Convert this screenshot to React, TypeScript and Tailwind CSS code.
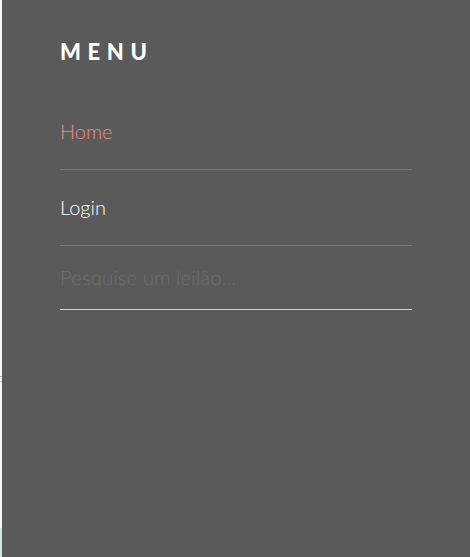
export default function App() {
  return (
    <div className="flex h-[557px] w-[470px] overflow-hidden" style={{ fontFamily: "Lato, 'Open Sans', sans-serif" }}>
      {/* page behind the drawer */}
      <div className="flex w-[2px] flex-col bg-[#f4f4f4]">
        <div className="h-[376px]" />
        <div className="h-px bg-[#b5b5b5]" />
        <div className="h-[4px]" />
        <div className="h-px bg-[#b5b5b5]" />
        <div className="flex-1" />
        <div className="h-[29px] bg-[#cfe8e6]" />
      </div>

      {/* drawer */}
      <nav className="flex-1 bg-[#5a5a5a] pl-[58px] pr-[58px] pt-[38px]">
        <h2 className="mb-[27px] text-[22px] font-black leading-[28px] tracking-[0.3em] text-white">
          MENU
        </h2>

        <a className="block border-b border-[#777777] py-[24px] text-[20px] font-light leading-[28px] text-[#ec8a92]">
          Home
        </a>
        <a className="block border-b border-[#777777] py-[24px] text-[20px] font-light leading-[27px] text-white">
          Login
        </a>

        <input
          type="text"
          placeholder="Pesquise um leilão..."
          className="block w-full border-b border-[#d0d0d0] bg-transparent py-[18px] text-[20.5px] font-light leading-[27px] text-white outline-none placeholder:text-[#6d6d6d]"
        />
      </nav>
    </div>
  );
}
